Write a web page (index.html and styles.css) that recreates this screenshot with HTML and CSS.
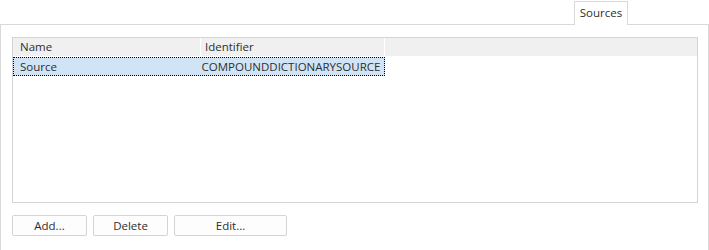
FILE: index.html
```html
<!DOCTYPE html>
<html lang="en">
<head>
  <meta charset="UTF-8">
  <title>Sources</title>
  <link rel="stylesheet" href="styles.css">
</head>
<body>

<div class="tabs">
  <div class="tab">Sources</div>
</div>

<div class="panel">
  <div class="list">
    <div class="row head">
      <div class="cell name">Name</div>
      <div class="cell ident">Identifier</div>
      <div class="cell fill"></div>
    </div>
    <div class="row selected">
      <div class="cell name">Source</div>
      <div class="cell ident">COMPOUNDDICTIONARYSOURCE</div>
    </div>
  </div>

  <div class="buttons">
    <button class="btn">Add...</button>
    <button class="btn">Delete</button>
    <button class="btn wide">Edit...</button>
  </div>
</div>

</body>
</html>
```

FILE: styles.css
```css
body { margin:0; width:709px; background:#fff; color:#2e2e2e; font-family:"Open Sans", "Noto Sans", sans-serif; font-size:11.5px; }
.tabs { display:flex; justify-content:flex-end; padding:1px 81px 0 0; }
.tab { position:relative; z-index:1; width:52px; height:23px; margin-bottom:-1px; border:1px solid #d9d9d9; border-bottom:none; background:#fff; text-align:center; line-height:21px; }
.panel { height:224px; border:1px solid #d9d9d9; padding:12px 10px 0 11px; box-sizing:content-box; }
.list { height:164px; border:1px solid #d4d4d4; }
.row { display:flex; height:18px; line-height:17px; }
.head { background:#f0f0f0; margin-bottom:1px; }
.head .cell { border-right:1px solid #fff; }
.head .fill { flex:1; border-right:none; }
.cell { box-sizing:border-box; padding-left:7px; white-space:nowrap; }
.name { width:188px; }
.ident { width:184px; padding-left:4px; }
.selected { width:372px; height:19px; box-sizing:border-box; border:1px dotted #000; background:#d1e4f5; }
.selected .name { width:187px; padding-left:6px; }
.selected .ident { padding-left:1px; }
.buttons { display:flex; gap:6px; margin-top:12px; }
.btn { width:75px; height:21px; padding:0; border:1px solid #d4d4d4; border-radius:2px; background:#fdfdfd; color:#2e2e2e; font:inherit; }
.btn.wide { width:113px; }
```
